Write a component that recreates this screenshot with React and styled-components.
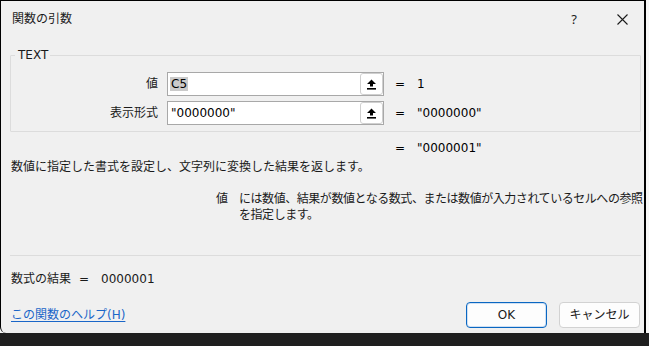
import React from "react";
import styled, { createGlobalStyle } from "styled-components";

const Global = createGlobalStyle`
  html, body { margin: 0; padding: 0; background: #f7f7f7; }
  body { font-family: "DejaVu Sans", "Noto Sans CJK JP", sans-serif; }
`;

const Stage = styled.div`
  width: 649px;
  height: 346px;
  display: flex;
  flex-direction: column;
  background: #f7f7f7;
  overflow: hidden;
`;

const Window = styled.div`
  box-sizing: border-box;
  width: 646px;
  height: 333px;
  background: #f0f0f0;
  border-top: 1px solid #000;
  border-left: 1px solid #000;
  border-right: 2px solid #000;
  border-bottom-left-radius: 6px;
  display: flex;
  flex-direction: column;
  font-size: 12px;
  line-height: 16px;
  color: #1a1a1a;
`;

const BottomBand = styled.div`
  flex: 1;
  background: #1f1f1f;
`;

const TitleBar = styled.div`
  height: 36px;
  display: flex;
  align-items: center;
  padding-left: 11px;
`;

const Title = styled.div`
  flex: 1;
`;

const CaptionButton = styled.div`
  width: ${(p) => p.$w}px;
  height: 36px;
  display: flex;
  align-items: center;
  justify-content: center;
  font-family: "Noto Sans", sans-serif;
  font-size: 13px;
  color: #1a1a1a;
`;

const Body = styled.div`
  flex: 1;
  display: flex;
  flex-direction: column;
  padding: 0 3px 0 9px;
`;

const GroupBox = styled.fieldset`
  margin: 10px 0 0 0;
  padding: 9px 0 6px 0;
  border: 1px solid #dcdcdc;
  border-radius: 1px;
  display: flex;
  flex-direction: column;
  gap: 5px;
  min-width: 0;
`;

const Legend = styled.legend`
  margin-left: 4px;
  padding: 0 2px 0 3px;
  line-height: 16px;
`;

const Row = styled.div`
  display: grid;
  grid-template-columns: 147px 217px auto;
  column-gap: 9px;
  align-items: center;
  height: ${(p) => p.$h || 24}px;
  margin-left: ${(p) => (p.$outside ? 1 : 0)}px;
  margin-top: ${(p) => p.$mt || 0}px;
`;

const Label = styled.div`
  text-align: right;
`;

const Input = styled.div`
  box-sizing: border-box;
  height: 24px;
  background: #fff;
  border: 1px solid #a8a8a8;
  display: flex;
  align-items: center;
  padding-left: 3px;
`;

const InputText = styled.div`
  flex: 1;
  color: #000;
`;

const Selected = styled.span`
  background: #cacaca;
  padding: 0 1px;
  margin-left: -1px;
`;

const RefButton = styled.div`
  box-sizing: border-box;
  width: 23px;
  height: 22px;
  background: #fff;
  border: 1px solid #cfcfcf;
  border-radius: 3px;
  display: flex;
  align-items: center;
  justify-content: center;
`;

const Result = styled.div`
  display: flex;
  gap: 12px;
  padding-left: 2px;
  color: #000;
`;

const Description = styled.div`
  margin-top: 3px;
  padding-left: 1px;
`;

const ArgHelp = styled.div`
  margin-top: 16px;
  display: grid;
  grid-template-columns: 23px 404px;
  padding-left: 206px;
`;

const ArgText = styled.span`
  letter-spacing: -0.45px;
`;

const Separator = styled.div`
  height: 1px;
  background: #dcdcdc;
  margin-top: 32px;
`;

const FormulaResult = styled.div`
  margin-top: 15px;
  padding-left: 1px;
  display: flex;
`;

const Piece = styled.span`
  margin-left: ${(p) => p.$ml || 0}px;
`;

const Footer = styled.div`
  margin-top: 15px;
  height: 26px;
  display: flex;
  align-items: center;
  gap: 12px;
  padding-right: 1px;
`;

const HelpLink = styled.a`
  flex: 1;
  color: #1a66c8;
  text-decoration: underline;
  text-underline-offset: 2px;
  padding-left: 1px;
`;

const Button = styled.div`
  box-sizing: border-box;
  width: ${(p) => p.$w}px;
  height: 26px;
  border-radius: 4px;
  background: #fdfdfd;
  border: 1px solid ${(p) => (p.$primary ? "#0a67c2" : "#d2d2d2")};
  box-shadow: ${(p) => (p.$primary ? "inset 0 0 0 1px #cfe0f3" : "none")};
  display: flex;
  align-items: center;
  justify-content: center;
  color: #1a1a1a;
`;

const UpArrow = () => (
  <svg width="11" height="11" viewBox="0 0 11 11">
    <polygon points="5.5,0.5 1,5 4,5 4,7.5 7,7.5 7,5 10,5" fill="#000" />
    <rect x="1" y="9" width="9" height="1.6" fill="#000" />
  </svg>
);

const CloseIcon = () => (
  <svg width="11" height="11" viewBox="0 0 11 11">
    <path d="M0.5 0.5 L10.5 10.5 M10.5 0.5 L0.5 10.5" stroke="#1a1a1a" strokeWidth="1.1" />
  </svg>
);

export default function App() {
  return (
    <Stage>
      <Global />
      <Window>
        <TitleBar>
          <Title>関数の引数</Title>
          <CaptionButton $w={52}>?</CaptionButton>
          <CaptionButton $w={44}>
            <CloseIcon />
          </CaptionButton>
        </TitleBar>
        <Body>
          <GroupBox>
            <Legend>TEXT</Legend>
            <Row>
              <Label>値</Label>
              <Input>
                <InputText>
                  <Selected>C5</Selected>
                </InputText>
                <RefButton>
                  <UpArrow />
                </RefButton>
              </Input>
              <Result>
                <span>=</span>
                <span>1</span>
              </Result>
            </Row>
            <Row>
              <Label>表示形式</Label>
              <Input>
                <InputText>"0000000"</InputText>
                <RefButton>
                  <UpArrow />
                </RefButton>
              </Input>
              <Result>
                <span>=</span>
                <span>"0000000"</span>
              </Result>
            </Row>
          </GroupBox>
          <Row $outside $h={16} $mt={8}>
            <span />
            <span />
            <Result>
              <span>=</span>
              <span>"0000001"</span>
            </Result>
          </Row>
          <Description>数値に指定した書式を設定し、文字列に変換した結果を返します。</Description>
          <ArgHelp>
            <span>値</span>
            <ArgText>
              には数値、結果が数値となる数式、または数値が入力されているセルへの参照を指定します。
            </ArgText>
          </ArgHelp>
          <Separator />
          <FormulaResult>
            <Piece>数式の結果</Piece>
            <Piece $ml={8}>=</Piece>
            <Piece $ml={12}>0000001</Piece>
          </FormulaResult>
          <Footer>
            <HelpLink>この関数のヘルプ(H)</HelpLink>
            <Button $primary $w={81}>OK</Button>
            <Button $w={81}>キャンセル</Button>
          </Footer>
        </Body>
      </Window>
      <BottomBand />
    </Stage>
  );
}
